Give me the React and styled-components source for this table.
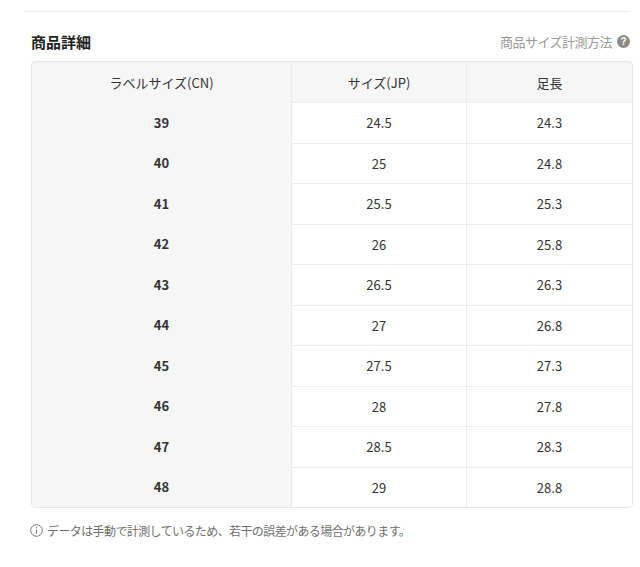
import React from "react";
import styled, { createGlobalStyle } from "styled-components";

const Global = createGlobalStyle`
  html, body { margin: 0; padding: 0; background: #fff; }
  body { font-family: "Noto Sans CJK JP", "Noto Sans", sans-serif; color: #333; }
`;

const Page = styled.div`
  padding: 11px 7px 0 31px;
  width: 640px;
  box-sizing: border-box;
`;

const Divider = styled.div`
  height: 1px;
  background: #efefef;
  margin: 0 3px 0 -6px;
`;

const Header = styled.div`
  display: flex;
  align-items: center;
  justify-content: space-between;
  height: 28px;
  margin: 15px 0 6px;
`;

const Title = styled.h2`
  margin: 0;
  font-size: 15px;
  font-weight: 700;
  color: #222;
  letter-spacing: 0;
`;

const HowTo = styled.a`
  display: flex;
  align-items: center;
  gap: 5px;
  font-size: 13px;
  letter-spacing: -0.5px;
  color: #999;
  text-decoration: none;
  margin-right: 3px;
`;

const QIcon = styled.span`
  width: 13px;
  height: 13px;
  border-radius: 50%;
  background: #8a8a8a;
  color: #fff;
  font-size: 10px;
  font-weight: 700;
  line-height: 13px;
  text-align: center;
  letter-spacing: 0;
  font-family: "Liberation Sans", sans-serif;
`;

const Table = styled.div`
  display: grid;
  grid-template-columns: 259px 175px 1fr;
  border: 1px solid #e6e6e6;
  border-radius: 4px;
  overflow: hidden;
`;

const Cell = styled.div`
  height: ${(p) => (p.$head ? "40px" : "40.5px")};
  box-sizing: border-box;
  display: flex;
  align-items: center;
  justify-content: center;
  font-size: 13px;
  color: #333;
  background: ${(p) => (p.$label || p.$head ? "#f6f6f6" : "#fff")};
  font-weight: ${(p) => (p.$label && !p.$head ? 700 : 400)};
  border-left: ${(p) => (p.$label ? "none" : "1px solid #ececec")};
  border-top: ${(p) => (p.$label || p.$head ? "none" : "1px solid #ececec")};
`;

const Note = styled.p`
  display: flex;
  align-items: center;
  gap: 4px;
  margin: 14px 0 0 -1px;
  font-size: 12px;
  letter-spacing: -0.6px;
  color: #6f6f6f;
`;

const InfoIcon = () => (
  <svg width="13" height="13" viewBox="0 0 13 13" fill="none">
    <circle cx="6.5" cy="6.5" r="5.8" stroke="#777" strokeWidth="1" />
    <line x1="6.5" y1="5.5" x2="6.5" y2="9.6" stroke="#777" strokeWidth="1.1" />
    <circle cx="6.5" cy="3.8" r="0.7" fill="#777" />
  </svg>
);

const rows = [
  ["39", "24.5", "24.3"],
  ["40", "25", "24.8"],
  ["41", "25.5", "25.3"],
  ["42", "26", "25.8"],
  ["43", "26.5", "26.3"],
  ["44", "27", "26.8"],
  ["45", "27.5", "27.3"],
  ["46", "28", "27.8"],
  ["47", "28.5", "28.3"],
  ["48", "29", "28.8"],
];

export default function App() {
  return (
    <>
      <Global />
      <Page>
        <Divider />
        <Header>
          <Title>商品詳細</Title>
          <HowTo href="#">
            商品サイズ計測方法
            <QIcon>?</QIcon>
          </HowTo>
        </Header>
        <Table>
          <Cell $head $label>ラベルサイズ(CN)</Cell>
          <Cell $head>サイズ(JP)</Cell>
          <Cell $head>足長</Cell>
          {rows.map((r) => (
            <React.Fragment key={r[0]}>
              <Cell $label>{r[0]}</Cell>
              <Cell>{r[1]}</Cell>
              <Cell>{r[2]}</Cell>
            </React.Fragment>
          ))}
        </Table>
        <Note>
          <InfoIcon />
          データは手動で計測しているため、若干の誤差がある場合があります。
        </Note>
      </Page>
    </>
  );
}
